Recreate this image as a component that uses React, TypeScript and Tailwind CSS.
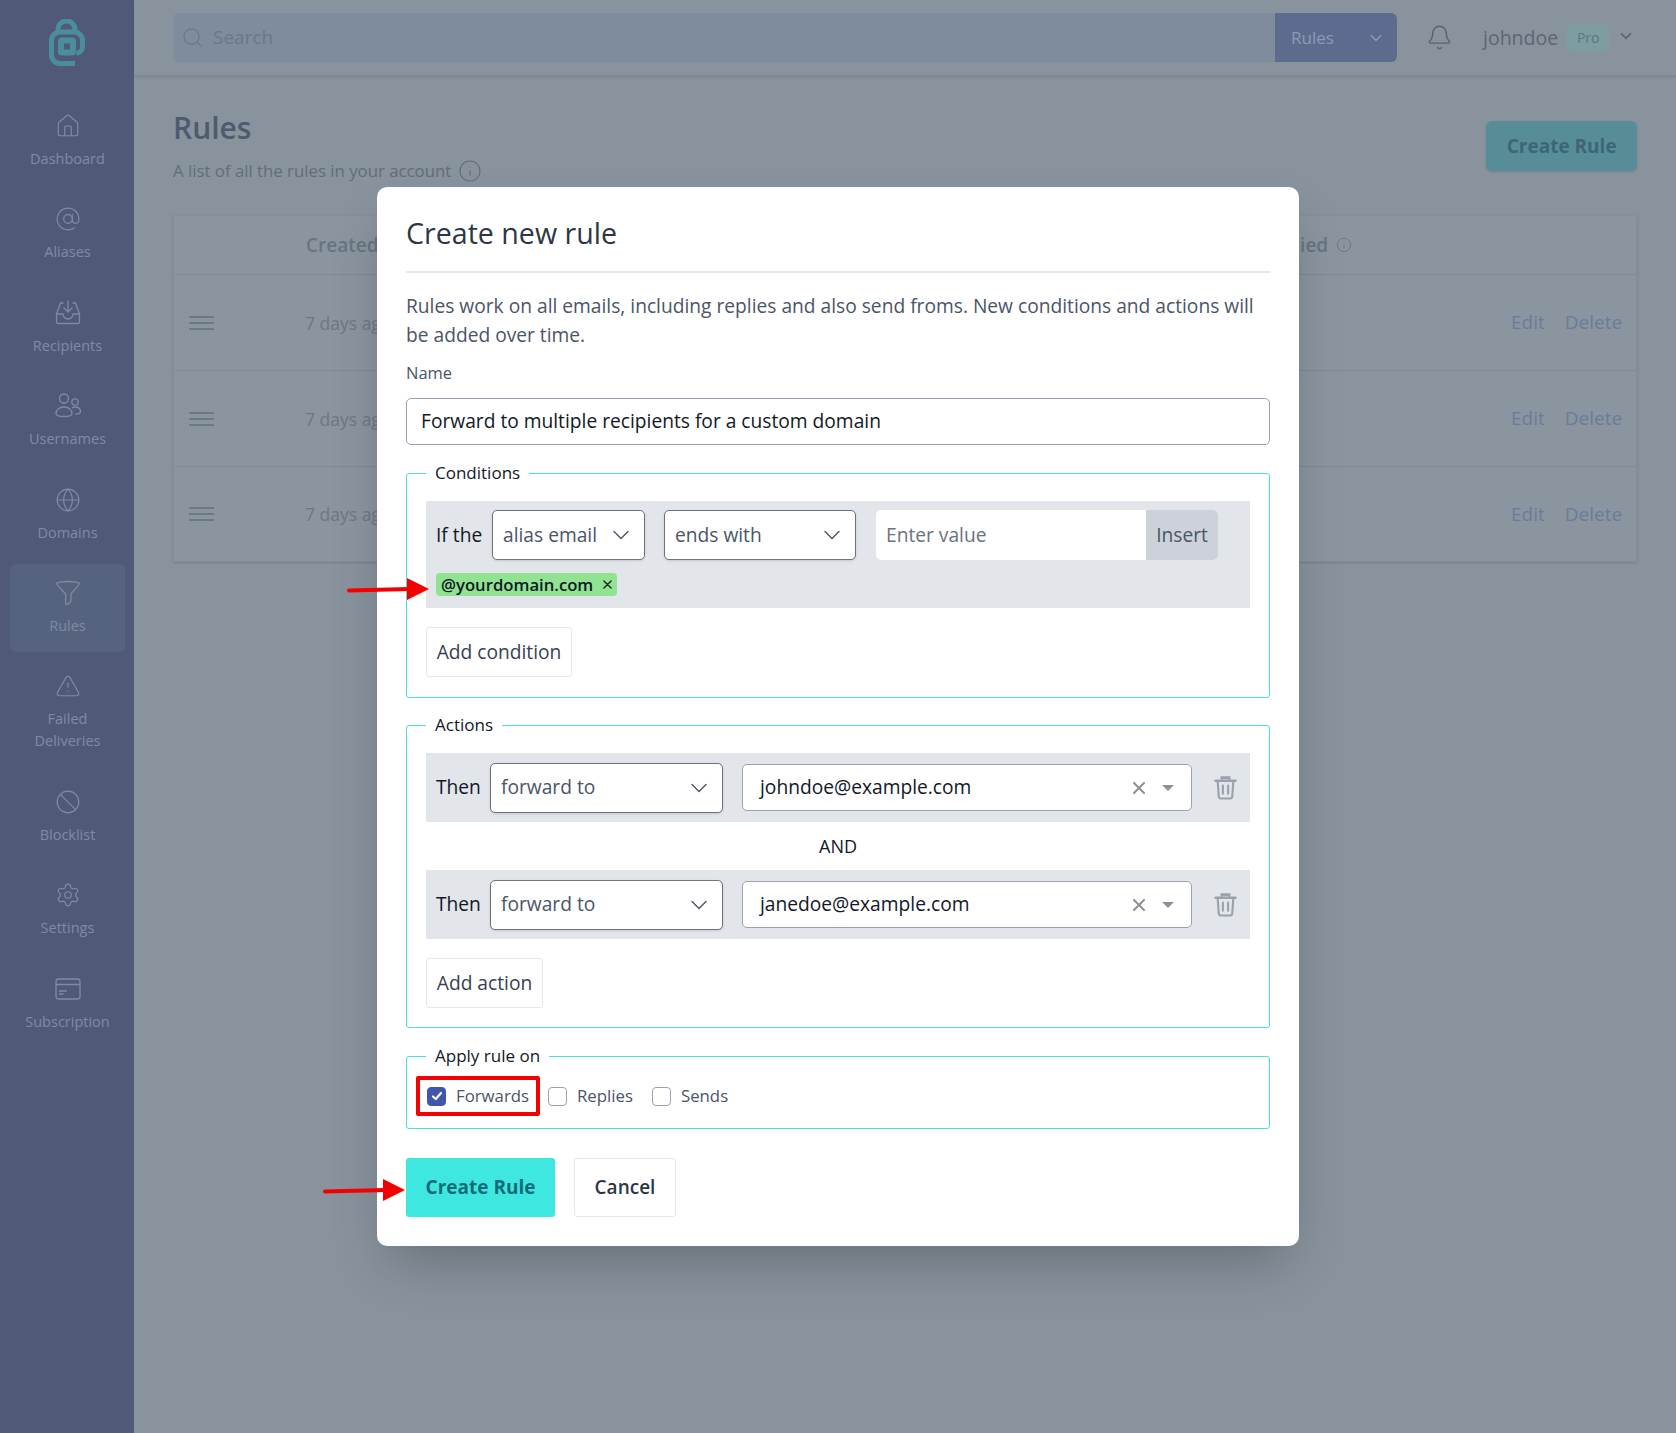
import { AtSign, Ban, Bell, ChevronDown, Globe, Info, Search, Settings, TriangleAlert, House } from "lucide-react";
import * as React from "react";

function Logo() {
  return (
    <svg viewBox="0 0 36 48" className="h-[48px] w-[36px]" fill="none">
      <path d="M9 14v-3.500a8.500 8.500 0 0 1 17 0V14" stroke="#4a8e9c" strokeWidth="5" />
      <path
        d="M26 44.500H11a8.500 8.500 0 0 1-8.500-8.500V21.500A8.500 8.500 0 0 1 11 13h14a8.500 8.500 0 0 1 8.500 8.500V28a6 6 0 0 1-6 6"
        stroke="#4a8e9c"
        strokeWidth="5"
      />
      <rect x="9" y="18.500" width="18" height="18" rx="4" fill="#4a8e9c" />
      <rect x="15" y="24.500" width="6" height="6" fill="#505a78" />
    </svg>
  );
}

const iconClass = "h-[26px] w-[26px]";

function InboxIcon() {
  return (
    <svg viewBox="0 0 26 26" className={iconClass} fill="none" stroke="currentColor" strokeWidth="1.300" strokeLinecap="round" strokeLinejoin="round">
      <path d="M8 3H5.500L1.500 14v7.500a2 2 0 0 0 2 2h19a2 2 0 0 0 2-2V14l-4-11H18" />
      <path d="M1.500 14H8a5 5 0 0 0 10 0h6.500" />
      <path d="M13 1v11M9 8l4 4 4-4" />
    </svg>
  );
}

function UsersIcon() {
  return (
    <svg viewBox="0 0 26 26" className={iconClass} fill="none" stroke="currentColor" strokeWidth="1.300">
      <circle cx="9" cy="5.500" r="4.500" />
      <circle cx="20" cy="9" r="3.200" />
      <path d="M1 20.500c0-4 3.500-6.500 8-6.500s8 2.500 8 6.500c0 2-2 3-8 3s-8-1-8-3Z" />
      <path d="M17 15c1-.6 2-1 3.500-1 3 0 5 2 5 4.500 0 1.500-1.500 2.500-5 2.500" />
    </svg>
  );
}

function FunnelIcon() {
  return (
    <svg viewBox="0 0 26 26" className={iconClass} fill="none" stroke="currentColor" strokeWidth="1.300" strokeLinejoin="round">
      <path d="M1.500 3c6-2 17-2 23 0 .5 2-7.500 9-8.500 11v7c0 1-4 4-5 3.500-.8-.4 0-7.500-.5-10.500C9.500 12 1 5 1.500 3Z" />
    </svg>
  );
}

function CardIcon() {
  return (
    <svg viewBox="0 0 26 26" className={iconClass} fill="none" stroke="currentColor" strokeWidth="1.300" strokeLinecap="round">
      <rect x="1" y="3" width="24" height="20" rx="2.500" />
      <path d="M1 8.500h24M4.500 15h7M4.500 18h3.500" />
    </svg>
  );
}

function TrashIcon() {
  return (
    <svg viewBox="0 0 22 24" className="h-[25px] w-[23px]" fill="none" stroke="#9aa1ad" strokeWidth="2" strokeLinecap="round">
      <path d="M1.500 5.500h19" strokeWidth="2.500" />
      <path d="M7.500 3.500V2.500h7V3.500" strokeWidth="2.500" />
      <path d="M3.500 6l1 14.500a2 2 0 0 0 2 2h9a2 2 0 0 0 2-2l1-14.500" />
      <path d="M8.500 10v8M13.500 10v8" strokeWidth="2" />
    </svg>
  );
}

function DragHandle() {
  return (
    <div className="flex w-[25px] flex-col gap-[4px]">
      <span className="h-[2px] bg-[#6d7885]" />
      <span className="h-[2px] bg-[#6d7885]" />
      <span className="h-[2px] bg-[#6d7885]" />
    </div>
  );
}

const navItems = [
  { label: "Dashboard", icon: <House className={iconClass} strokeWidth={1.1} /> },
  { label: "Aliases", icon: <AtSign className={iconClass} strokeWidth={1.1} /> },
  { label: "Recipients", icon: <InboxIcon /> },
  { label: "Usernames", icon: <UsersIcon /> },
  { label: "Domains", icon: <Globe className={iconClass} strokeWidth={1.1} /> },
  { label: "Rules", icon: <FunnelIcon />, active: true },
  { label: "Failed Deliveries", icon: <TriangleAlert className={iconClass} strokeWidth={1.1} />, tall: true },
  { label: "Blocklist", icon: <Ban className={iconClass} strokeWidth={1.1} /> },
  { label: "Settings", icon: <Settings className={iconClass} strokeWidth={1.1} /> },
  { label: "Subscription", icon: <CardIcon /> },
];

function Sidebar() {
  return (
    <aside className="flex w-[134px] shrink-0 flex-col items-center bg-[#505a78] text-[#7f8ba3]">
      <div className="flex h-[78px] w-full items-center justify-center pt-[7px]">
        <Logo />
      </div>
      <nav className="flex w-full flex-col gap-[5.400px] pt-[19px] pr-[9px] pl-[10px]">
        {navItems.map((item) => (
          <div
            key={item.label}
            className={`flex flex-col items-center rounded-md pt-[16px] ${item.tall ? "h-[110px]" : "h-[88px]"} ${item.active ? "bg-[#56637f]" : ""}`}
          >
            {item.icon}
            <span className="mt-[9px] w-[100px] text-center text-[14.500px] leading-[22px]">{item.label}</span>
          </div>
        ))}
      </nav>
    </aside>
  );
}

function Header() {
  return (
    <header className="flex h-[76px] items-center border-b border-[#7f8a95] pr-[42px] pl-[39px] shadow-sm">
      <div className="flex h-[49px] w-[1224px] overflow-hidden rounded-md">
        <div className="flex flex-1 items-center gap-[9px] bg-[#7f8c9e] pl-[8px] text-[#6c7788]">
          <Search className="h-[23px] w-[23px]" strokeWidth={1.3} />
          <span className="text-[19px]">Search</span>
        </div>
        <div className="flex w-[122px] items-center justify-between bg-[#5d6c8e] pr-[11px] pl-[16px] text-[#8d9bb3]">
          <span className="text-[17px]">Rules</span>
          <ChevronDown className="h-[20px] w-[20px]" strokeWidth={1.5} />
        </div>
      </div>
      <Bell className="ml-[29px] h-[27px] w-[27px] text-[#59636f]" strokeWidth={1.3} />
      <span className="ml-[30px] text-[19.500px] text-[#5c6674]">johndoe</span>
      <span className="ml-[9px] flex h-[27px] w-[42px] items-center justify-center rounded bg-[#7d9da1] text-[14px] text-[#557788]">
        Pro
      </span>
      <ChevronDown className="mb-[4px] ml-[8px] h-[18px] w-[18px] text-[#59636f]" strokeWidth={2.2} />
    </header>
  );
}

function RulesTable() {
  return (
    <div className="mt-[32px] border border-[#848f99] bg-[#8a959f] shadow-sm">
      <div className="flex h-[59px] items-center border-b border-[#7f8a94] pr-[284px] pl-[132px] text-[19px] font-semibold text-[#687483]">
        <span>Created</span>
        <span className="ml-auto">Last Applied</span>
        <Info className="ml-[8px] h-[16px] w-[16px]" strokeWidth={1.3} />
      </div>
      {[0, 1, 2].map((row) => (
        <div key={row} className="flex h-[96px] items-center border-b border-[#7f8a94] pr-[14px] pl-[15px] last:h-[94px] last:border-b-0">
          <DragHandle />
          <span className="ml-[91px] text-[17.500px] text-[#6d7885]">7 days ago</span>
          <span className="ml-auto text-[19px] text-[#6b7b9c]">Edit</span>
          <span className="ml-[20px] text-[19px] text-[#6b7b9c]">Delete</span>
        </div>
      ))}
    </div>
  );
}

function Field({ legend, className, children }: { legend: string; className: string; children: React.ReactNode }) {
  return (
    <fieldset className={`rounded-[3px] border border-[#46dfdb] px-[19px] ${className}`}>
      <legend className="px-[9px] text-[17px] leading-[22px] text-[#111827]">{legend}</legend>
      {children}
    </fieldset>
  );
}

function Select({ value, className }: { value: string; className: string }) {
  return (
    <div className={`flex h-[50px] shrink-0 items-center justify-between rounded-[5px] border border-[#6b7280] bg-white pr-[9px] pl-[10px] text-[19.200px] text-[#4a5568] shadow-sm ${className}`}>
      <span>{value}</span>
      <ChevronDown className="h-[28px] w-[28px] text-[#4a5568]" strokeWidth={1.2} />
    </div>
  );
}

function ActionRow({ email }: { email: string }) {
  return (
    <div className="flex h-[69px] items-center bg-[#e2e5ea] pl-[10px]">
      <span className="w-[54px] text-[19.200px] text-[#111827]">Then</span>
      <Select value="forward to" className="w-[233px]" />
      <div className="ml-[19px] flex h-[47px] w-[450px] items-center rounded-[5px] border border-[#9aa3b2] bg-white pr-[17px] pl-[17px] text-[19.200px] text-[#111827]">
        <span className="flex-1">{email}</span>
        <svg viewBox="0 0 12 12" className="h-[12px] w-[12px]" stroke="#909090" strokeWidth="2" strokeLinecap="round">
          <path d="M1 1l10 10M11 1L1 11" />
        </svg>
        <span className="ml-[17px] h-0 w-0 border-x-[6px] border-t-[6px] border-x-transparent border-t-[#909090]" />
      </div>
      <div className="ml-[22px]">
        <TrashIcon />
      </div>
    </div>
  );
}

function Checkbox({ label, checked }: { label: string; checked?: boolean }) {
  return (
    <div className="flex items-center">
      <span
        className={`flex h-[19px] w-[19px] items-center justify-center rounded-[4px] border ${checked ? "border-[#4056ab] bg-[#4056ab]" : "border-[#9aa3b2] bg-white"}`}
      >
        {checked && (
          <svg viewBox="0 0 12 12" className="h-[12px] w-[12px]" fill="none" stroke="white" strokeWidth="2.200" strokeLinecap="round" strokeLinejoin="round">
            <path d="M2 6.500l2.800 2.500L10 3" />
          </svg>
        )}
      </span>
      <span className="ml-[10px] text-[16.800px] text-[#4a5568]">{label}</span>
    </div>
  );
}

function Arrow({ className }: { className: string }) {
  return (
    <svg viewBox="0 0 82 24" className={`pointer-events-none absolute h-[24px] w-[82px] ${className}`}>
      <path d="M2 13.500L62 12" stroke="#f50000" strokeWidth="4" strokeLinecap="round" />
      <path d="M60 1l22 11-22 11z" fill="#f50000" />
    </svg>
  );
}

function RuleModal() {
  return (
    <div className="absolute top-[187px] left-[377px] h-[1059px] w-[922px] rounded-[10px] bg-white px-[29px] shadow-2xl">
      <h2 className="flex h-[86px] items-center border-b-2 border-[#e5e7eb] pt-[8px] text-[28.600px] text-[#2d3748]">Create new rule</h2>
      <p className="mt-[18px] text-[19.200px] leading-[29px] text-[#4a5568]">
        Rules work on all emails, including replies and also send froms. New conditions and actions will be added over time.
      </p>
      <label className="mt-[13px] block text-[16.500px] leading-[22px] text-[#4a5568]">Name</label>
      <div className="mt-[14px] flex h-[47px] items-center rounded-[5px] border border-[#9aa3b2] pl-[14px] text-[19.200px] text-[#111827]">
        Forward to multiple recipients for a custom domain
      </div>

      <Field legend="Conditions" className="mt-[17px] h-[236px] pt-[17px]">
        <div className="h-[107px] bg-[#e2e5ea] pt-[9px] pl-[10px]">
          <div className="flex items-center">
            <span className="w-[56px] text-[19.200px] text-[#111827]">If the</span>
            <Select value="alias email" className="w-[153px]" />
            <Select value="ends with" className="ml-[19px] w-[192px]" />
            <div className="ml-[20px] flex h-[50px] w-[342px] overflow-hidden rounded-[5px] bg-white text-[19.200px]">
              <span className="flex flex-1 items-center pl-[10px] text-[#6b7280]">Enter value</span>
              <span className="flex w-[72px] items-center justify-center bg-[#cdd1d9] text-[#4a5568]">Insert</span>
            </div>
          </div>
          <span className="mt-[13px] inline-flex h-[23px] items-center rounded bg-[#8fe391] px-[5px] text-[16.700px] font-semibold text-[#111827]">
            @yourdomain.com
            <svg viewBox="0 0 10 10" className="ml-[10px] h-[9px] w-[9px]" stroke="#222" strokeWidth="1.500" strokeLinecap="round">
              <path d="M1 1l8 8M9 1L1 9" />
            </svg>
          </span>
        </div>
        <button className="mt-[19px] h-[50px] w-[146px] rounded-[3px] border border-[#e5e7eb] text-[19.200px] text-[#374151]">Add condition</button>
      </Field>

      <Field legend="Actions" className="mt-[16px] h-[314px] pt-[17px]">
        <ActionRow email="johndoe@example.com" />
        <div className="flex h-[48px] items-center justify-center text-[18px] text-[#111827]">AND</div>
        <ActionRow email="janedoe@example.com" />
        <button className="mt-[19px] h-[50px] w-[117px] rounded-[3px] border border-[#e5e7eb] text-[19.200px] text-[#374151]">Add action</button>
      </Field>

      <Field legend="Apply rule on" className="mt-[17px] h-[84px] pt-[9px]">
        <div className="-ml-[10px] flex items-center">
          <div className="flex h-[40px] w-[124px] items-center rounded-[2px] border-[4px] border-[#f50000] pl-[7px]">
            <Checkbox label="Forwards" checked />
          </div>
          <div className="ml-[8px]">
            <Checkbox label="Replies" />
          </div>
          <div className="ml-[19px]">
            <Checkbox label="Sends" />
          </div>
        </div>
      </Field>

      <div className="mt-[29px] flex gap-[19px]">
        <button className="h-[59px] w-[149px] rounded-[3px] bg-[#3ee8e0] text-[19px] font-bold text-[#126c78]">Create Rule</button>
        <button className="h-[59px] w-[102px] rounded-[3px] border border-[#e5e7eb] text-[19px] font-semibold text-[#2d3748]">Cancel</button>
      </div>

      <Arrow className="top-[390px] left-[-30px]" />
      <Arrow className="top-[991px] left-[-54px]" />
    </div>
  );
}

export default function App() {
  return (
    <div className="relative flex h-[1433px] overflow-hidden bg-[#88939d] font-['Open_Sans',sans-serif]">
      <Sidebar />
      <main className="flex-1">
        <Header />
        <section className="pr-[40px] pl-[39px]">
          <div className="flex items-start justify-between pt-[27px]">
            <div>
              <h1 className="text-[30px] leading-[50px] font-semibold text-[#4e5b6e]">Rules</h1>
              <div className="mt-[5px] flex items-center gap-[7px] text-[16.800px] text-[#626d7c]">
                A list of all the rules in your account
                <Info className="h-[24px] w-[24px]" strokeWidth={1.2} />
              </div>
            </div>
            <button className="mt-[18px] h-[50px] w-[151px] rounded-md bg-[#578d97] text-[19px] font-bold text-[#3e6577] shadow-sm">
              Create Rule
            </button>
          </div>
          <RulesTable />
        </section>
      </main>
      <RuleModal />
    </div>
  );
}
